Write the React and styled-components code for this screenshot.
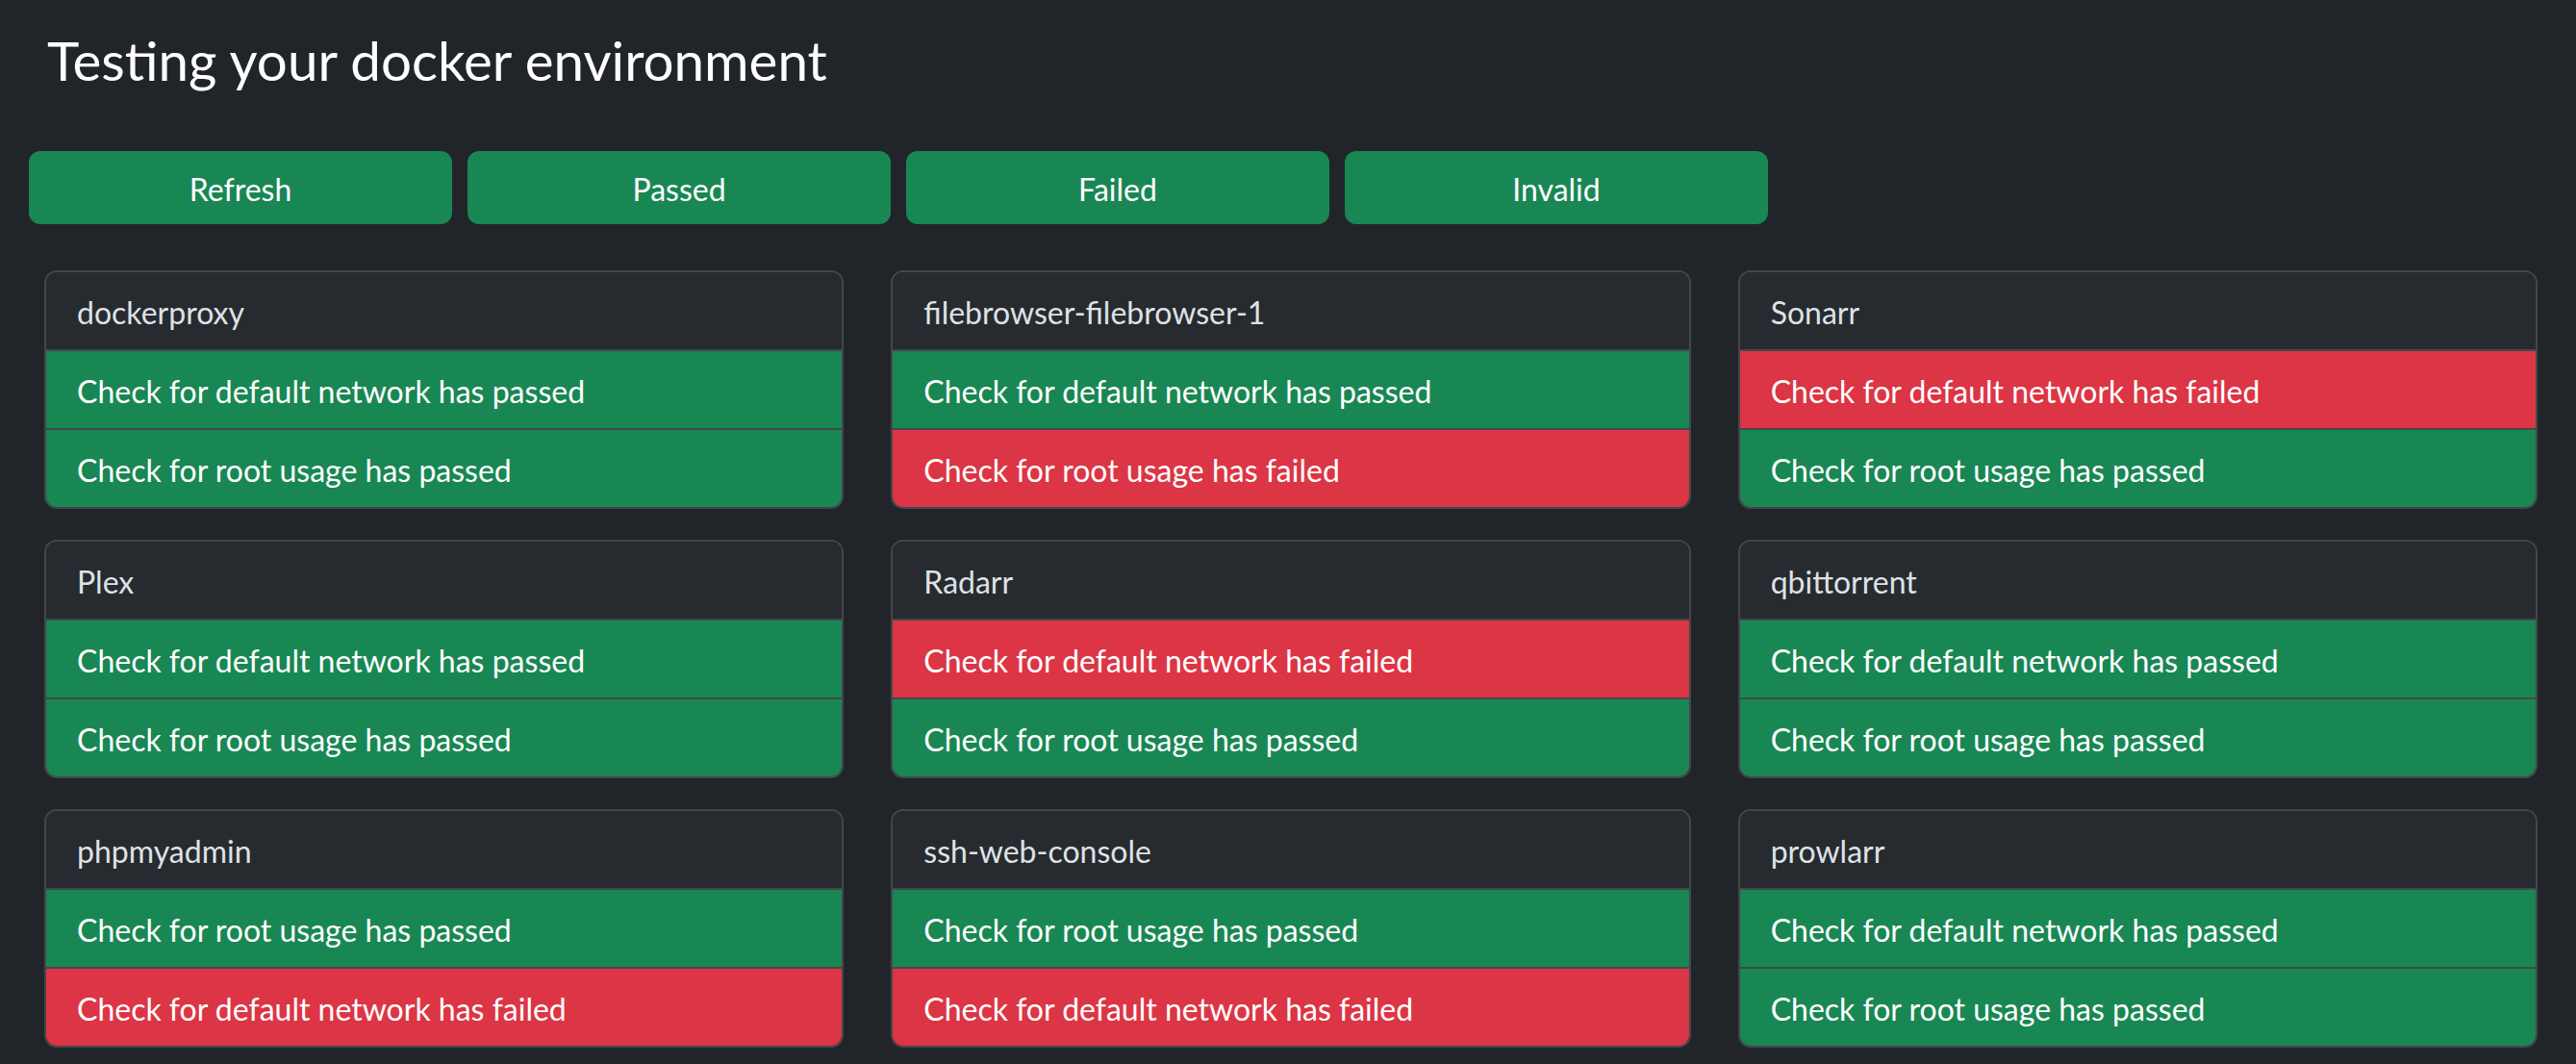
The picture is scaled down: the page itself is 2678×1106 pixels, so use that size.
import styled, { createGlobalStyle } from "styled-components";

const GlobalStyle = createGlobalStyle`
  html, body {
    margin: 0;
    padding: 0;
    background: #212529;
  }
  body {
    font-family: Lato, "Liberation Sans", sans-serif;
    color: #dee2e6;
  }
`;

const Page = styled.div`
  min-height: 1106px;
  box-sizing: border-box;
  padding: 29px 40px 20px 30px;
`;

const Title = styled.h1`
  margin: 0 0 60px 19px;
  font-size: 56.5px;
  font-weight: 400;
  line-height: 1.2;
  color: #ffffff;
`;

const Toolbar = styled.div`
  display: flex;
  gap: 16px;
  margin-bottom: 48px;
`;

const ToolButton = styled.button`
  width: 440px;
  height: 76px;
  padding: 4px 0 0;
  border: none;
  border-radius: 12px;
  background: #198754;
  color: #ffffff;
  font-family: inherit;
  font-size: 32px;
  line-height: 48px;
  cursor: pointer;
`;

const Grid = styled.div`
  display: grid;
  grid-template-columns: repeat(3, 1fr);
  column-gap: 49px;
  row-gap: 32px;
  padding-left: 16px;
`;

const Card = styled.div`
  border: 2px solid #43474b;
  border-radius: 13px;
  overflow: hidden;
  background: #212529;
`;

const CardHeader = styled.div`
  padding: 18px 32px 14px;
  font-size: 32px;
  line-height: 48px;
  color: #dee2e6;
  background: #272b2f;
  border-bottom: 2px solid #43474b;
`;

const CheckRow = styled.div`
  padding: 18px 32px 14px;
  font-size: 32px;
  line-height: 48px;
  color: #ffffff;
  background: ${(p) => (p.$passed ? "#198754" : "#dc3545")};
  & + & {
    border-top: 2px solid #43474b;
  }
`;

const NET = "default network";
const ROOT = "root usage";

const containers = [
  { name: "dockerproxy", checks: [[NET, true], [ROOT, true]] },
  { name: "filebrowser-filebrowser-1", checks: [[NET, true], [ROOT, false]] },
  { name: "Sonarr", checks: [[NET, false], [ROOT, true]] },
  { name: "Plex", checks: [[NET, true], [ROOT, true]] },
  { name: "Radarr", checks: [[NET, false], [ROOT, true]] },
  { name: "qbittorrent", checks: [[NET, true], [ROOT, true]] },
  { name: "phpmyadmin", checks: [[ROOT, true], [NET, false]] },
  { name: "ssh-web-console", checks: [[ROOT, true], [NET, false]] },
  { name: "prowlarr", checks: [[NET, true], [ROOT, true]] },
];

export default function App() {
  return (
    <>
      <GlobalStyle />
      <Page>
        <Title>Testing your docker environment</Title>
        <Toolbar>
          <ToolButton>Refresh</ToolButton>
          <ToolButton>Passed</ToolButton>
          <ToolButton>Failed</ToolButton>
          <ToolButton>Invalid</ToolButton>
        </Toolbar>
        <Grid>
          {containers.map((c) => (
            <Card key={c.name}>
              <CardHeader>{c.name}</CardHeader>
              {c.checks.map(([what, ok]) => (
                <CheckRow key={what} $passed={ok}>
                  Check for {what} has {ok ? "passed" : "failed"}
                </CheckRow>
              ))}
            </Card>
          ))}
        </Grid>
      </Page>
    </>
  );
}
